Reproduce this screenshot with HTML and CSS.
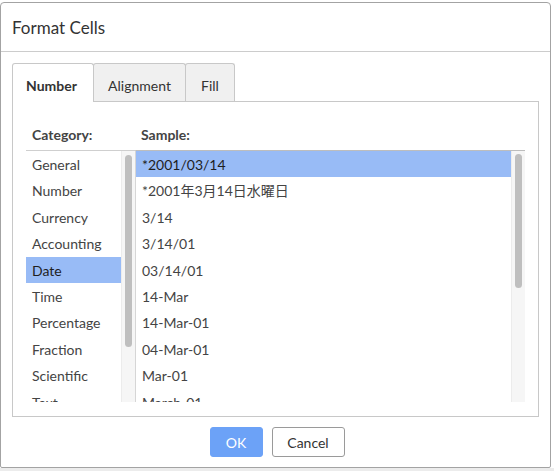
FILE: index.html
```html
<!DOCTYPE html>
<html>
<head>
<meta charset="utf-8">
<link rel="stylesheet" href="styles.css">
</head>
<body>
<div class="dialog">
  <div class="header">Format Cells</div>
  <div class="content">
    <div class="tabs">
      <div class="tab active">Number</div>
      <div class="tab">Alignment</div>
      <div class="tab">Fill</div>
    </div>
    <div class="panel">
      <div class="col cat-col">
        <div class="label">Category:</div>
        <div class="listbox">
          <div class="list cat-list">
            <div class="item">General</div>
            <div class="item">Number</div>
            <div class="item">Currency</div>
            <div class="item">Accounting</div>
            <div class="item sel">Date</div>
            <div class="item">Time</div>
            <div class="item">Percentage</div>
            <div class="item">Fraction</div>
            <div class="item">Scientific</div>
            <div class="item">Text</div>
          </div>
          <div class="scroll"><div class="thumb cat-thumb"></div></div>
        </div>
      </div>
      <div class="col sample-col">
        <div class="label">Sample:</div>
        <div class="listbox sample-box">
          <div class="list sample-list">
            <div class="item sel">*2001/03/14</div>
            <div class="item">*2001年3月14日水曜日</div>
            <div class="item">3/14</div>
            <div class="item">3/14/01</div>
            <div class="item">03/14/01</div>
            <div class="item">14-Mar</div>
            <div class="item">14-Mar-01</div>
            <div class="item">04-Mar-01</div>
            <div class="item">Mar-01</div>
            <div class="item">March-01</div>
          </div>
          <div class="scroll"><div class="thumb sample-thumb"></div></div>
        </div>
      </div>
    </div>
    <div class="buttons">
      <button class="btn ok">OK</button>
      <button class="btn cancel">Cancel</button>
    </div>
  </div>
</div>
</body>
</html>
```
FILE: styles.css
```css
html, body {
  margin: 0;
  padding: 0;
}
body {
  background: #ffffff;
  font-family: Lato, "Noto Sans CJK JP", sans-serif;
  color: #333;
  width: 554px;
  height: 471px;
  overflow: hidden;
  position: relative;
}
body::after {
  content: "";
  display: block;
  height: 4px;
  background: #ececec;
}
.dialog {
  margin-top: 2px;
  width: 549px;
  height: 464px;
  border: 1px solid #a3a3a3;
  border-radius: 4px 4px 2px 2px;
  background: #fff;
  display: flex;
  flex-direction: column;
}
.header {
  height: 48px;
  display: flex;
  align-items: center;
  padding-left: 11px;
  font-size: 17px;
  color: #333;
  border-bottom: 1px solid #cccccc;
}
.content {
  padding: 11px 11px 0 11px;
}
.tabs {
  display: flex;
  height: 38px;
}
.tab {
  box-sizing: border-box;
  height: 38px;
  padding: 14px 13px 7px 13px;
  line-height: 16px;
  font-size: 14px;
  color: #333;
  background: #f0f0f0;
  border: 1px solid #c8c8c8;
  border-bottom: none;
  border-radius: 3px 3px 0 0;
  margin-right: -1px;
}
.tab.active {
  background: #fff;
  font-weight: bold;
  height: 39px;
  position: relative;
  z-index: 1;
  width: 82px;
  padding-left: 13px;
}
.tab:nth-child(2) { width: 93px; text-align: center; padding-left: 0; padding-right: 0; }
.tab:nth-child(3) { width: 50px; text-align: center; padding-left: 0; padding-right: 0; }
.panel {
  box-sizing: border-box;
  width: 527px;
  height: 316px;
  border: 1px solid #c8c8c8;
  padding: 22px 13px 0 13px;
  display: flex;
}
.col {
  display: flex;
  flex-direction: column;
}
.label {
  font-size: 14px;
  font-weight: bold;
  color: #444;
  line-height: 20px;
  padding-top: 1px;
  height: 20px;
  padding-left: 6px;
  margin-bottom: 5px;
}
.cat-col {
  width: 109px;
}
.sample-col {
  width: 390px;
}
.listbox {
  display: flex;
  height: 251px;
  border-top: 1px solid #cfcfcf;
  overflow: hidden;
}
.sample-box {
  border-left: 1px solid #d6d6d6;
  border-top-color: #bdbdbd;
}
.list {
  flex: 1;
  overflow: hidden;
}
.item {
  box-sizing: border-box;
  height: 26.4px;
  line-height: 26.4px;
  padding-top: 1px;
  font-size: 14px;
  color: #444;
  padding-left: 6px;
  white-space: nowrap;
}
.item.sel {
  background: #98bbf6;
  color: #1e1e1e;
}
.scroll {
  width: 13px;
  background: #f6f6f6;
  border-left: 1px solid #ececec;
  position: relative;
}
.thumb {
  position: absolute;
  left: 3px;
  width: 7px;
  background: #bfbfbf;
  border-radius: 4px;
}
.cat-thumb {
  top: 4px;
  height: 192px;
}
.sample-thumb {
  top: 3px;
  height: 134px;
}
.buttons {
  display: flex;
  justify-content: center;
  gap: 9px;
  margin-top: 10px;
  padding-left: 3px;
}
.btn {
  height: 30px;
  font-family: Lato, sans-serif;
  font-size: 14px;
  border-radius: 3px;
  padding: 0;
}
.ok {
  width: 53px;
  background: #6ca2f7;
  color: #fff;
  border: 1px solid #6ca2f7;
}
.cancel {
  width: 73px;
  background: #fff;
  color: #333;
  border: 1px solid #9a9a9a;
}
```
